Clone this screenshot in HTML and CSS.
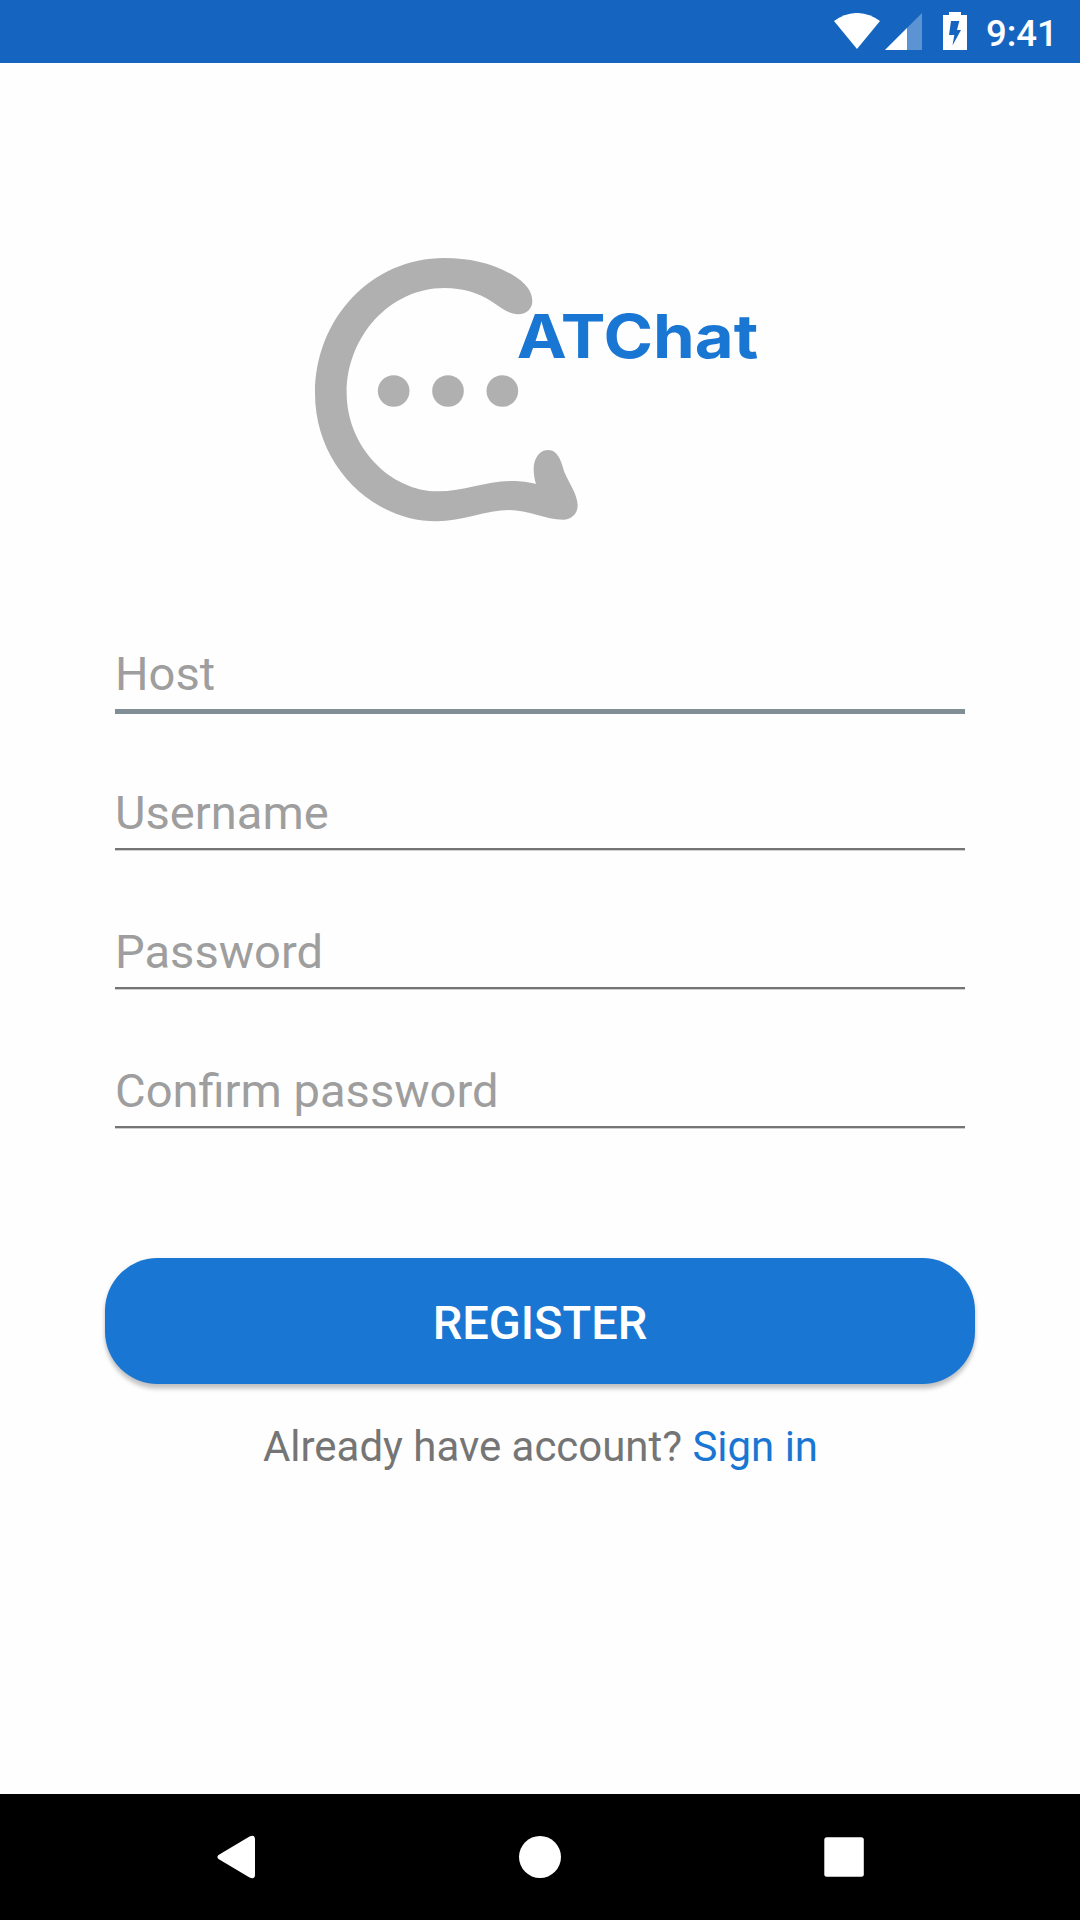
FILE: index.html
```html
<!DOCTYPE html>
<html lang="en">
<head>
<meta charset="utf-8">
<title>ATChat – Register</title>
<link rel="stylesheet" href="styles.css">
</head>
<body>
<div class="screen">
  <header class="status-bar">
    <svg class="wifi" viewBox="0 0 46 36"><path d="M0 8C14-2.7 32-2.7 46 8L23 36Z"/></svg>
    <svg class="signal" viewBox="0 0 37 37"><path opacity=".3" d="M37 0V37H0Z"/><path d="M22 15V37H0Z"/></svg>
    <svg class="battery" viewBox="0 0 24 38"><path fill-rule="evenodd" d="M6 0H18V3H24V38H0V3H6ZM8 9L6 23H11.300L9.500 33.500L18 18H14L16.300 9Z"/></svg>
    <span class="clock">9:41</span>
  </header>
  <main class="content">
    <svg class="logo" viewBox="0 0 1440 900" role="img" aria-label="ATChat">
      <path class="bubble" d="M727 184C727 150 702 126 672 107C610 70 540 54 463 54C245 54 75 235 75 460C75 680 250 844 440 844C515 844 590 810 657 810C715 810 765 839 820 839C845 839 863 820 863 796C863 765 838 730 824 698C815 672 808 630 773 630C745 630 731 660 731 688C731 704 734 720 738 732C715 726 695 723 665 723C590 723 520 754 445 754C300 754 170 620 170 458C170 290 300 144 463 144C520 144 565 159 606 185C632 202 655 223 685 223C710 223 727 206 727 184Z"/>
      <circle class="bubble" cx="311" cy="453" r="47.5"/>
      <circle class="bubble" cx="474" cy="453" r="47.5"/>
      <circle class="bubble" cx="637" cy="453" r="47.5"/>
      <text class="wordmark" x="680" y="354" textLength="725" lengthAdjust="spacingAndGlyphs">ATChat</text>
    </svg>
    <form class="form">
      <div class="field"><input class="input input-active" type="text" placeholder="Host"></div>
      <div class="field"><input class="input" type="text" placeholder="Username"></div>
      <div class="field"><input class="input" type="password" placeholder="Password"></div>
      <div class="field"><input class="input" type="password" placeholder="Confirm password"></div>
      <button class="register" type="button">REGISTER</button>
    </form>
    <p class="signin">Already have account? <a class="link">Sign in</a></p>
  </main>
  <nav class="nav-bar">
    <svg class="nav-icon" viewBox="0 0 44 44"><path d="M4.500 20Q2.300 22 4.500 24L35.500 42.500Q41 45 41 39.500V4.500Q41-1 35.500 1.500Z"/></svg>
    <svg class="nav-icon" viewBox="0 0 44 44"><circle cx="22" cy="22" r="21"/></svg>
    <svg class="nav-icon" viewBox="0 0 44 44"><rect x="2.300" y="2.300" width="39.500" height="39.500" rx="2.500"/></svg>
  </nav>
</div>
</body>
</html>
```
FILE: styles.css
```css
* { box-sizing: border-box; }

body {
  margin: 0;
  font-family: Roboto, sans-serif;
  background: #fefefe;
}

.screen {
  width: 1080px;
  height: 1920px;
  display: flex;
  flex-direction: column;
}

.status-bar {
  height: 63px;
  padding: 0 25px 1px 0;
  display: flex;
  justify-content: flex-end;
  align-items: center;
  background: #1565c0;
  color: #fff;
  fill: #fff;
}

.wifi { width: 46px; height: 36px; margin-right: 5px; }
.signal { width: 37px; height: 37px; margin-right: 21px; }
.battery { width: 24px; height: 38px; margin-right: 19px; }
.clock { width: 69px; font-size: 36.5px; font-weight: 500; line-height: 43px; padding-top: 4px; white-space: nowrap; }

.content {
  flex: 1;
  display: flex;
  flex-direction: column;
  align-items: center;
  padding-top: 177px;
}

.logo { width: 480px; height: 300px; margin-right: 20px; }
.bubble { fill: #b0b0b0; }
.wordmark {
  font-family: Inter, sans-serif;
  font-weight: 700;
  font-size: 181.500px;
  fill: #1976d2;
}

.form {
  width: 870px;
  padding-top: 37px;
  display: flex;
  flex-direction: column;
}

.field { height: 139px; padding: 69px 10px 0; }

.input {
  display: block;
  width: 100%;
  height: 65px;
  padding: 0 0 9px;
  border: 0;
  border-bottom: 2px solid #757575;
  border-radius: 0;
  box-shadow: 0 1px #cfcfcf;
  outline: 0;
  background: none;
  font: 47.1px/54px Roboto, sans-serif;
}
.input::placeholder { color: #9e9e9e; opacity: 1; }
.input-active { height: 68px; border-bottom: 5px solid #808e95; box-shadow: none; }

.register {
  height: 126px;
  margin-top: 125px;
  padding: 3px 0 0;
  border: 0;
  border-radius: 52.5px;
  background: #1976d2;
  box-shadow: 0 5px 4px rgba(0, 0, 0, .2), 0 1px 5px rgba(0, 0, 0, .08);
  color: #fff;
  font: 500 47px/56px Roboto, sans-serif;
}

.signin {
  margin: 38px 0 0;
  padding-left: 1px;
  font-size: 41.95px;
  line-height: 49px;
  color: #757575;
}
.link { color: #1976d2; }

.nav-bar {
  height: 126px;
  display: flex;
  justify-content: center;
  align-items: center;
  gap: 260px;
  background: #000;
  fill: #fff;
}
.nav-icon { width: 44px; height: 44px; }
```
